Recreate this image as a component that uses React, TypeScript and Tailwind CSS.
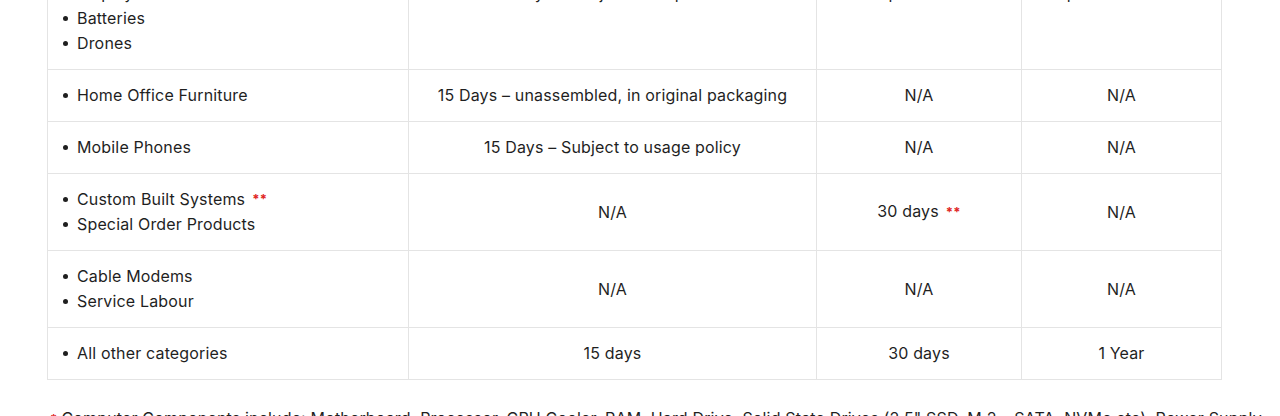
const font = { fontFamily: 'Inter, "Liberation Sans", sans-serif' }

type Row = {
  items: { label: string; mark?: boolean }[]
  refund: string
  exchange: { text: string; mark?: boolean }
  warranty: string
}

const ROWS: Row[] = [
  {
    items: [
      { label: 'Computers', mark: true },
      { label: 'Laptops' },
      { label: 'Displays' },
      { label: 'Batteries' },
      { label: 'Drones' },
    ],
    refund: '15 Days – Subject to inspection',
    exchange: { text: 'Replacement' },
    warranty: 'As per manufacturer',
  },
  {
    items: [{ label: 'Home Office Furniture' }],
    refund: '15 Days – unassembled, in original packaging',
    exchange: { text: 'N/A' },
    warranty: 'N/A',
  },
  {
    items: [{ label: 'Mobile Phones' }],
    refund: '15 Days – Subject to usage policy',
    exchange: { text: 'N/A' },
    warranty: 'N/A',
  },
  {
    items: [{ label: 'Custom Built Systems', mark: true }, { label: 'Special Order Products' }],
    refund: 'N/A',
    exchange: { text: '30 days', mark: true },
    warranty: 'N/A',
  },
  {
    items: [{ label: 'Cable Modems' }, { label: 'Service Labour' }],
    refund: 'N/A',
    exchange: { text: 'N/A' },
    warranty: 'N/A',
  },
  {
    items: [{ label: 'All other categories' }],
    refund: '15 days',
    exchange: { text: '30 days' },
    warranty: '1 Year',
  },
]

function Mark() {
  return <span className="ml-[7px] text-[13px] font-bold text-[#e0261f]">**</span>
}

export default function App() {
  return (
    <div
      className="h-[416px] overflow-hidden bg-white text-[16px] leading-[25px] tracking-[0.01em] text-[#1f1f1f]"
      style={font}
    >
      <div className="-mt-[83px] pl-[47px]">
        <table className="w-[1174px] table-fixed border-collapse">
          <colgroup>
            <col className="w-[361px]" />
            <col className="w-[408px]" />
            <col className="w-[205px]" />
            <col className="w-[200px]" />
          </colgroup>
          <tbody>
            {ROWS.map((row, i) => (
              <tr key={i}>
                <td className="border border-[#e4e4e4] py-[13px] pl-[15px] align-middle">
                  <ul>
                    {row.items.map((it) => (
                      <li key={it.label} className="flex items-center">
                        <span className="mr-[9px] h-[5px] w-[5px] rounded-full bg-[#1f1f1f]" />
                        <span>{it.label}</span>
                        {it.mark && <Mark />}
                      </li>
                    ))}
                  </ul>
                </td>
                <td className="border border-[#e4e4e4] py-[13px] text-center align-middle">{row.refund}</td>
                <td className="border border-[#e4e4e4] py-[13px] text-center align-middle">
                  {row.exchange.text}
                  {row.exchange.mark && <Mark />}
                </td>
                <td className="border border-[#e4e4e4] py-[13px] text-center align-middle">{row.warranty}</td>
              </tr>
            ))}
          </tbody>
        </table>
        <p className="mt-[26px] pl-[3px] whitespace-nowrap">
          <span className="mr-[4px] text-[13px] font-bold text-[#e0261f]">*</span>
          Computer Components include: Motherboard, Processor, CPU Cooler, RAM, Hard Drive, Solid State Drives (2.5" SSD, M.2 – SATA, NVMe etc), Power Supply
        </p>
      </div>
    </div>
  )
}
